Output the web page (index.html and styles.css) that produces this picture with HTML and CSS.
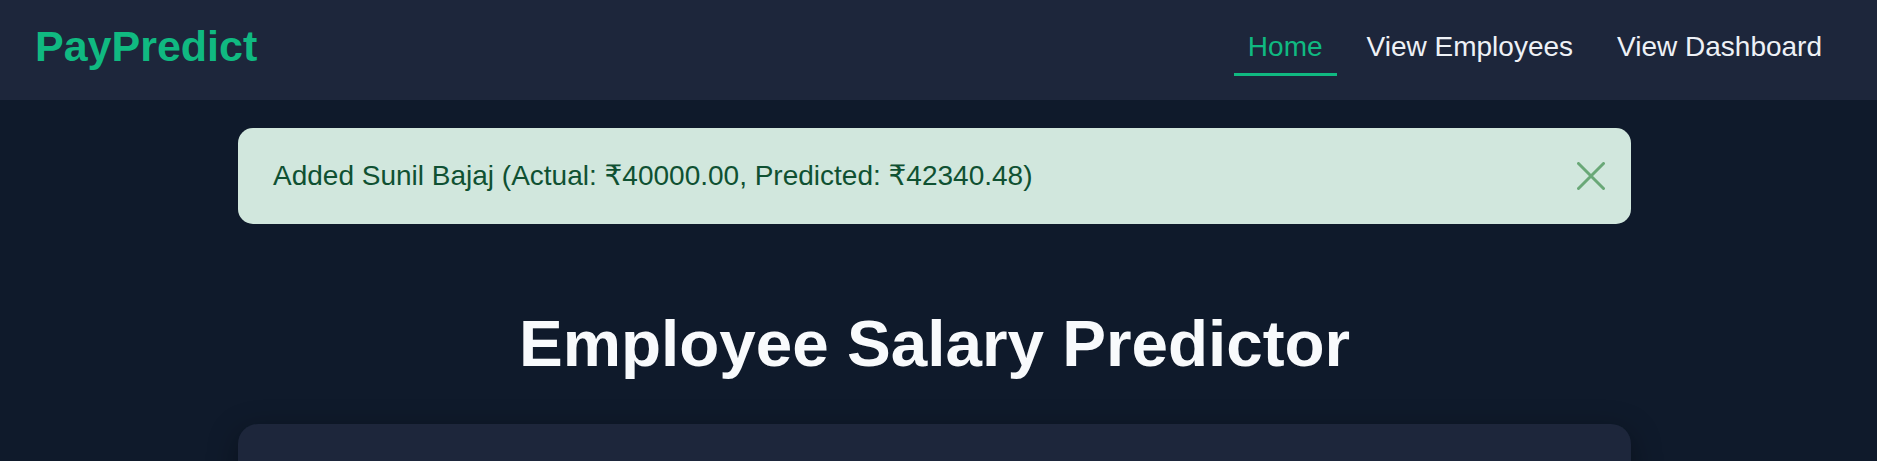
FILE: index.html
```html
<!DOCTYPE html>
<html lang="en">
<head>
<meta charset="utf-8">
<title>PayPredict</title>
<link rel="stylesheet" href="styles.css">
</head>
<body>
<header class="topbar">
  <a class="brand" href="#">PayPredict</a>
  <nav class="nav">
    <a class="nav-link active" href="#">Home</a>
    <a class="nav-link" href="#">View Employees</a>
    <a class="nav-link" href="#">View Dashboard</a>
  </nav>
</header>
<main class="container">
  <div class="alert">
    <span class="alert-text">Added Sunil Bajaj (Actual: ₹40000.00, Predicted: ₹42340.48)</span>
    <button class="alert-close" aria-label="Close">
      <svg width="28" height="28" viewBox="0 0 28 28"><path d="M1.5 1.5 L26.5 26.5 M26.5 1.5 L1.5 26.5" stroke="currentColor" stroke-width="3" stroke-linecap="round" fill="none"/></svg>
    </button>
  </div>
  <h1 class="title">Employee Salary Predictor</h1>
  <section class="card"></section>
</main>
</body>
</html>
```
FILE: styles.css
```css
* { box-sizing: border-box; }
html, body { margin: 0; padding: 0; }
body {
  background: #0f1a2b;
  font-family: "Liberation Sans", Arial, "DejaVu Sans", sans-serif;
  color: #f1f5f9;
  height: 461px;
  overflow: hidden;
}
.topbar {
  height: 100px;
  background: #1d263b;
  display: flex;
  align-items: center;
  justify-content: space-between;
  padding: 0 41px 0 35px;
}
.brand {
  color: #10b981;
  font-weight: 700;
  font-size: 43px;
  line-height: 50px;
  text-decoration: none;
  padding-bottom: 9px;
}
.nav {
  display: flex;
  gap: 16px;
}
.nav-link {
  color: #eef1f6;
  text-decoration: none;
  font-size: 28px;
  line-height: 32px;
  padding: 6px 14px 10px;
  border-bottom: 3px solid transparent;
}
.nav-link.active {
  color: #10b981;
  border-bottom-color: #10b981;
}
.container {
  width: 1393px;
  margin: 0 0 0 238px;
  padding-top: 28px;
}
.alert {
  background: #d1e7dd;
  color: #0f5132;
  border-radius: 15px;
  height: 96px;
  padding: 0 26px 0 35px;
  display: flex;
  align-items: center;
  justify-content: space-between;
  font-size: 28px;
  line-height: 32px;
}
.alert-close {
  background: none;
  border: 0;
  padding: 0;
  width: 28px;
  height: 28px;
  color: #69a877;
  display: flex;
}
.title {
  margin: 82px 0 43px;
  text-align: center;
  font-size: 65.6px;
  font-weight: 700;
  line-height: normal;
  color: #f8fafc;
}
.card {
  background: #1d263b;
  border-radius: 20px;
  height: 120px;
  box-shadow: 0 8px 30px rgba(0, 0, 0, 0.35);
}
```
